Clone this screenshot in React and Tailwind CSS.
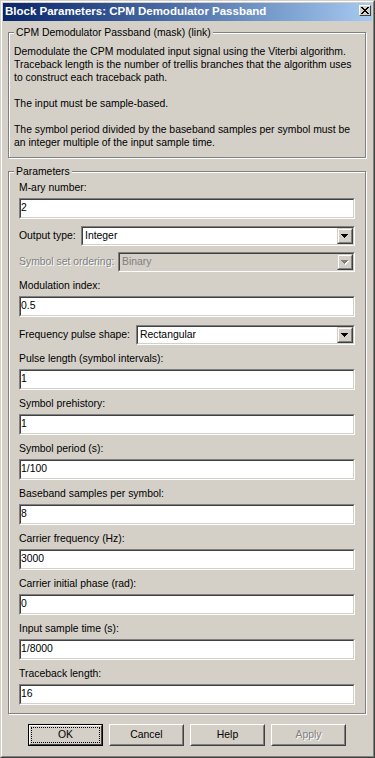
import React from "react";

function Arrow({ disabled }) {
  const fill = disabled ? "#808080" : "#000000";
  return (
    <svg width="8" height="5" viewBox="0 0 8 5" shapeRendering="crispEdges">
      {disabled && (
        <g fill="#ffffff">
          <rect x="1" y="1" width="7" height="1" />
          <rect x="2" y="2" width="5" height="1" />
          <rect x="3" y="3" width="3" height="1" />
          <rect x="4" y="4" width="1" height="1" />
        </g>
      )}
      <g fill={fill}>
        <rect x="0" y="0" width="7" height="1" />
        <rect x="1" y="1" width="5" height="1" />
        <rect x="2" y="2" width="3" height="1" />
        <rect x="3" y="3" width="1" height="1" />
      </g>
    </svg>
  );
}

function Edit({ value }) {
  return (
    <div className="h-[21px] border border-t-[#808080] border-l-[#808080] border-b-white border-r-white">
      <div className="h-full border border-t-[#404040] border-l-[#404040] border-b-[#d4d0c8] border-r-[#d4d0c8] bg-white flex items-center leading-none text-black">
        {value}
      </div>
    </div>
  );
}

function Label({ children }) {
  return <div className="h-[14px] leading-[14px] whitespace-nowrap">{children}</div>;
}

function Popup({ label, value, labelW, disabled, className }) {
  return (
    <div className={"flex items-center h-[20px] " + (className || "")}>
      <div
        className={
          "shrink-0 whitespace-nowrap " +
          (disabled ? "text-[#808080] [text-shadow:1px_1px_0_#ffffff]" : "")
        }
        style={{ width: labelW }}
      >
        {label}
      </div>
      <div className="flex-1 h-[20px] border border-t-[#808080] border-l-[#808080] border-b-white border-r-white">
        <div
          className={
            "h-full flex items-stretch border border-t-[#404040] border-l-[#404040] border-b-[#d4d0c8] border-r-[#d4d0c8] " +
            (disabled ? "bg-[#d4d0c8]" : "bg-white")
          }
        >
          <div
            className={
              "flex-1 flex items-center pl-[2px] leading-none " +
              (disabled ? "text-[#808080]" : "text-black")
            }
          >
            {value}
          </div>
          <div className="w-[16px] border border-t-[#d4d0c8] border-l-[#d4d0c8] border-b-[#404040] border-r-[#404040]">
            <div className="h-full border border-t-white border-l-white border-b-[#808080] border-r-[#808080] bg-[#d4d0c8] flex items-center justify-center">
              <Arrow disabled={disabled} />
            </div>
          </div>
        </div>
      </div>
    </div>
  );
}

function Field({ label, value, first }) {
  return (
    <div className={first ? "" : "mt-[7px]"}>
      <Label>{label}</Label>
      <div className="mt-[3px]">
        <Edit value={value} />
      </div>
    </div>
  );
}

function Btn({ children, isDefault, disabled }) {
  if (isDefault) {
    return (
      <div className="w-[75px] h-[22px] border border-black">
        <div className="h-full border border-t-white border-l-white border-b-[#404040] border-r-[#404040] flex">
          <div className="flex-1 m-[1px] border border-dotted border-black flex items-center justify-center leading-none">
            {children}
          </div>
        </div>
      </div>
    );
  }
  return (
    <div className="w-[75px] h-[22px] border border-t-white border-l-white border-b-[#404040] border-r-[#404040]">
      <div
        className={
          "h-full border border-t-[#d4d0c8] border-l-[#d4d0c8] border-b-[#808080] border-r-[#808080] flex items-center justify-center leading-none " +
          (disabled ? "text-[#808080] [text-shadow:1px_1px_0_#ffffff]" : "")
        }
      >
        {children}
      </div>
    </div>
  );
}

export default function App() {
  return (
    <div className="w-[375px] h-[758px] bg-[#d4d0c8] font-['Liberation_Sans',Arial,sans-serif] text-[10.4px] text-black border border-t-[#d4d0c8] border-l-[#d4d0c8] border-b-[#404040] border-r-[#404040] overflow-hidden">
      <div className="h-full border border-t-white border-l-white border-b-[#808080] border-r-[#808080] p-[1px] flex flex-col">
        {/* Title bar */}
        <div className="h-[18px] shrink-0 flex items-start bg-gradient-to-r from-[#0a246a] to-[#a6caf0]">
          <div className="pl-[2px] h-[18px] flex items-center text-white font-bold text-[11.5px] whitespace-nowrap">
            Block Parameters: CPM Demodulator Passband
          </div>
          <div className="ml-auto mr-[1px] mt-[2px] w-[12px] h-[11px] border border-t-white border-l-white border-b-[#404040] border-r-[#404040] bg-[#d4d0c8] flex items-center justify-center">
            <svg width="8" height="7" viewBox="0 0 8 7" shapeRendering="crispEdges">
              <g fill="#000">
                <rect x="0" y="0" width="2" height="1" />
                <rect x="6" y="0" width="2" height="1" />
                <rect x="1" y="1" width="2" height="1" />
                <rect x="5" y="1" width="2" height="1" />
                <rect x="2" y="2" width="4" height="1" />
                <rect x="3" y="3" width="2" height="1" />
                <rect x="2" y="4" width="4" height="1" />
                <rect x="1" y="5" width="2" height="1" />
                <rect x="5" y="5" width="2" height="1" />
                <rect x="0" y="6" width="2" height="1" />
                <rect x="6" y="6" width="2" height="1" />
              </g>
            </svg>
          </div>
        </div>

        {/* Body */}
        <div className="flex-1 flex flex-col pl-[5px] pr-[6px]">
          <fieldset className="mt-[5px] min-w-0 border border-[#808080] shadow-[inset_1px_1px_0_#ffffff,1px_1px_0_#ffffff] pl-[5px] pr-[5px] pt-[6px] pb-[8px]">
            <legend className="px-[2px] leading-[13px] bg-[#d4d0c8] whitespace-nowrap">
              CPM Demodulator Passband (mask) (link)
            </legend>
            <div className="leading-[13px] whitespace-nowrap">
              <div>Demodulate the CPM modulated input signal using the Viterbi algorithm.</div>
              <div>Traceback length is the number of trellis branches that the algorithm uses</div>
              <div>to construct each traceback path.</div>
              <div className="h-[13px]"></div>
              <div>The input must be sample-based.</div>
              <div className="h-[13px]"></div>
              <div>The symbol period divided by the baseband samples per symbol must be</div>
              <div>an integer multiple of the input sample time.</div>
            </div>
          </fieldset>

          <fieldset className="mt-[7px] min-w-0 border border-[#808080] shadow-[inset_1px_1px_0_#ffffff,1px_1px_0_#ffffff] pl-[5px] pr-[5px] pt-[3px] pb-[8px]">
            <legend className="px-[2px] leading-[13px] bg-[#d4d0c8] whitespace-nowrap">Parameters</legend>
            <div className="px-[5px]">
              <Field first label="M-ary number:" value="2" />
              <Popup className="mt-[7px]" label="Output type:" value="Integer" labelW="62px" />
              <Popup className="mt-[6px]" label="Symbol set ordering:" value="Binary" labelW="99px" disabled />
              <Field label="Modulation index:" value="0.5" />
              <Popup className="mt-[8px]" label="Frequency pulse shape:" value="Rectangular" labelW="117px" />
              <Field label="Pulse length (symbol intervals):" value="1" />
              <Field label="Symbol prehistory:" value="1" />
              <Field label="Symbol period (s):" value="1/100" />
              <Field label="Baseband samples per symbol:" value="8" />
              <Field label="Carrier frequency (Hz):" value="3000" />
              <Field label="Carrier initial phase (rad):" value="0" />
              <Field label="Input sample time (s):" value="1/8000" />
              <Field label="Traceback length:" value="16" />
            </div>
          </fieldset>

          <div className="mt-[10px] flex justify-center gap-[6px]">
            <Btn isDefault>OK</Btn>
            <Btn>Cancel</Btn>
            <Btn>Help</Btn>
            <Btn disabled>Apply</Btn>
          </div>
        </div>
      </div>
    </div>
  );
}
